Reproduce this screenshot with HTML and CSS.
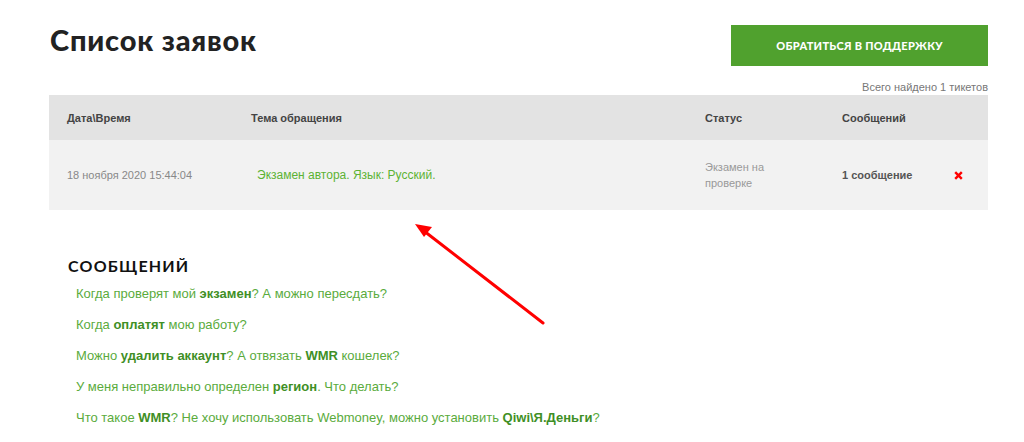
FILE: index.html
```html
<!DOCTYPE html>
<html lang="ru">
<head>
    <meta charset="UTF-8">
    <meta name="viewport" content="width=device-width, initial-scale=1.0">
    <title>Список заявок</title>
    <link rel="stylesheet" href="styles.css">
</head>
<body>
    <div class="page">
        <div class="page-header">
            <h1>Список заявок</h1>
            <a href="#" class="support-btn">Обратиться в поддержку</a>
        </div>
        <div class="total">Всего найдено 1 тикетов</div>

        <div class="tickets">
            <div class="tickets-row tickets-head">
                <div>Дата\Время</div>
                <div>Тема обращения</div>
                <div>Статус</div>
                <div>Сообщений</div>
                <div></div>
            </div>
            <div class="tickets-row tickets-item">
                <div class="t-date">18 ноября 2020 15:44:04</div>
                <div class="t-topic"><a href="#">Экзамен автора. Язык: Русский.</a></div>
                <div class="t-status">Экзамен на<br>проверке</div>
                <div class="t-count">1 сообщение</div>
                <div class="t-remove">
                    <svg width="9" height="9" viewBox="0 0 9 9">
                        <path d="M1.2 1.2 L7.8 7.8 M7.8 1.2 L1.2 7.8" stroke="#f00" stroke-width="2.4"/>
                    </svg>
                </div>
            </div>
        </div>

        <div class="faq">
            <h2>Сообщений</h2>
            <ul>
                <li><a href="#">Когда проверят мой <b>экзамен</b>? А можно пересдать?</a></li>
                <li><a href="#">Когда <b>оплатят</b> мою работу?</a></li>
                <li><a href="#">Можно <b>удалить аккаунт</b>? А отвязать <b>WMR</b> кошелек?</a></li>
                <li><a href="#">У меня неправильно определен <b>регион</b>. Что делать?</a></li>
                <li><a href="#">Что такое <b>WMR</b>? Не хочу использовать Webmoney, можно установить <b>Qiwi\Я.Деньги</b>?</a></li>
            </ul>
        </div>
    </div>

    <svg class="arrow" width="1024" height="442" viewBox="0 0 1024 442">
        <line x1="543" y1="323" x2="424" y2="231" stroke="#f00" stroke-width="3" stroke-linecap="round"/>
        <polygon points="415,224 432,227 424,237" fill="#f00"/>
    </svg>
</body>
</html>
```

FILE: styles.css
```css
* {
    margin: 0;
    padding: 0;
    box-sizing: border-box;
}

body {
    font-family: 'Liberation Sans', Arial, sans-serif;
    background: #fff;
    color: #333;
    width: 1024px;
    height: 442px;
    overflow: hidden;
    position: relative;
}

.page {
    width: 939px;
    margin-left: 49px;
}

.page-header {
    display: flex;
    justify-content: space-between;
    align-items: flex-start;
    padding-top: 25px;
}

.page-header h1 {
    font-family: Lato, 'Noto Sans', sans-serif;
    font-weight: 900;
    font-size: 29px;
    letter-spacing: 0.8px;
    color: #222;
    line-height: 30px;
    margin-left: 1px;
}

.support-btn {
    display: flex;
    align-items: center;
    justify-content: center;
    width: 257px;
    height: 41px;
    background: #50a12e;
    color: #fff;
    font-family: Lato, 'Noto Sans', sans-serif;
    font-weight: 900;
    font-size: 11px;
    letter-spacing: 0.3px;
    text-transform: uppercase;
    text-decoration: none;
}

.total {
    text-align: right;
    font-size: 11px;
    color: #777;
    line-height: 14px;
    margin-top: 14px;
}

.tickets {
    margin-top: 1px;
}

.tickets-row {
    display: grid;
    grid-template-columns: 184px 454px 137px 116px 1fr;
    align-items: center;
    padding-left: 18px;
}

.tickets-head {
    height: 45px;
    background: #e3e3e3;
    font-size: 11px;
    font-weight: 700;
    color: #444;
}

.tickets-item {
    height: 70px;
    background: #f2f2f2;
    font-size: 11px;
    color: #888;
}

.t-topic {
    padding-left: 6px;
}

.t-topic a {
    color: #5cb233;
    text-decoration: none;
    font-size: 12px;
}

.t-status {
    color: #999;
    line-height: 16px;
}

.t-count {
    font-weight: 700;
    color: #555;
}

.t-remove {
    display: flex;
    margin-left: -4px;
}

.faq {
    padding-left: 19px;
    margin-top: 47px;
}

.faq h2 {
    font-family: Lato, 'Noto Sans', sans-serif;
    font-weight: 700;
    font-size: 16px;
    letter-spacing: 1.2px;
    text-transform: uppercase;
    color: #111;
    line-height: 18px;
}

.faq ul {
    list-style: none;
    padding-left: 8px;
    margin-top: 11px;
}

.faq li {
    height: 31px;
    font-size: 13px;
    line-height: 16px;
}

.faq a {
    color: #5aab3c;
    text-decoration: none;
}

.faq b {
    color: #3f8f26;
}

.arrow {
    position: absolute;
    left: 0;
    top: 0;
    pointer-events: none;
}
```
